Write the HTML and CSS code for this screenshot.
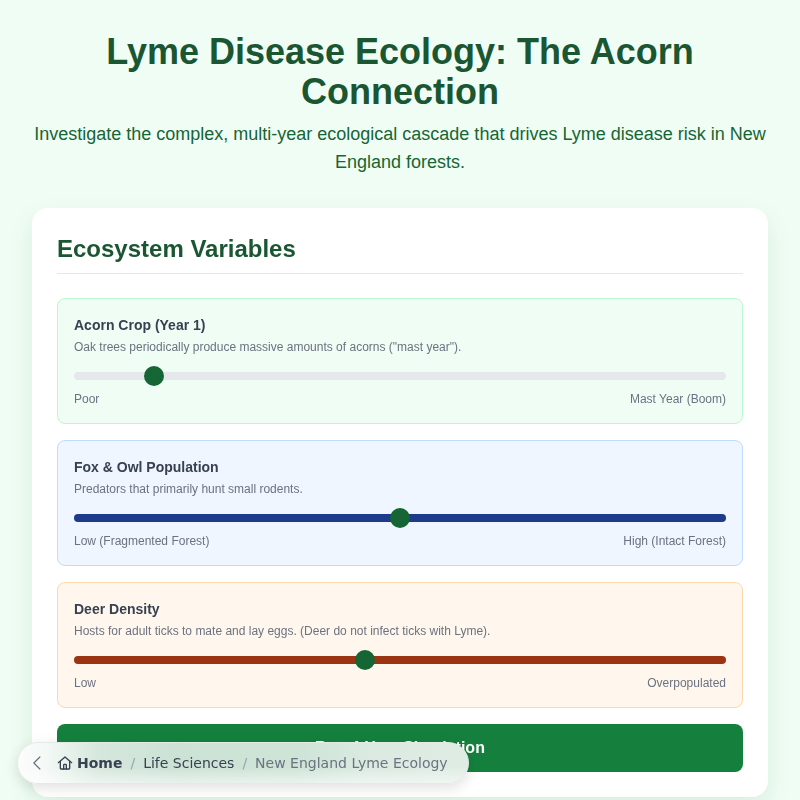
FILE: index.html
```html
<!DOCTYPE html>
<html lang="en">
<head>
    <meta charset="UTF-8">
    <meta name="viewport" content="width=device-width, initial-scale=1.0">
    <title>Lyme Disease Ecology: The Acorn Connection</title>
    <link rel="stylesheet" href="styles.css">
</head>
<body>
    <div class="main">
        <header class="intro">
            <h1>Lyme Disease Ecology: The Acorn Connection</h1>
            <p>Investigate the complex, multi-year ecological cascade that drives Lyme disease risk in New England forests.</p>
        </header>

        <section class="card">
            <h2>Ecosystem Variables</h2>

            <div class="variable acorn">
                <h3>Acorn Crop (Year 1)</h3>
                <p class="desc">Oak trees periodically produce massive amounts of acorns ("mast year").</p>
                <div class="track"><span class="thumb" style="left: 70px"></span></div>
                <div class="ends"><span>Poor</span><span>Mast Year (Boom)</span></div>
            </div>

            <div class="variable fox">
                <h3>Fox &amp; Owl Population</h3>
                <p class="desc">Predators that primarily hunt small rodents.</p>
                <div class="track"><span class="thumb" style="left: 316px"></span></div>
                <div class="ends"><span>Low (Fragmented Forest)</span><span>High (Intact Forest)</span></div>
            </div>

            <div class="variable deer">
                <h3>Deer Density</h3>
                <p class="desc">Hosts for adult ticks to mate and lay eggs. (Deer do not infect ticks with Lyme).</p>
                <div class="track"><span class="thumb" style="left: 281px"></span></div>
                <div class="ends"><span>Low</span><span>Overpopulated</span></div>
            </div>

            <button class="run" type="button">Run 4-Year Simulation</button>
        </section>
    </div>

    <nav class="crumbs">
        <svg class="back" width="18" height="18" viewBox="0 0 24 24" fill="none" stroke="currentColor" stroke-width="1.6" stroke-linecap="round" stroke-linejoin="round"><path d="M14.5 4l-8 8 8 8"/></svg>
        <a class="home" href="#">
            <svg width="16" height="16" viewBox="0 0 24 24" fill="none" stroke="currentColor" stroke-width="2" stroke-linecap="round" stroke-linejoin="round"><path d="M2 11.5L12 3l10 8.5"/><path d="M5 9.5V20a1 1 0 0 0 1 1h12a1 1 0 0 0 1-1V9.5"/><path d="M10 21v-6a1 1 0 0 1 1-1h2a1 1 0 0 1 1 1v6"/></svg>
            Home
        </a>
        <span class="sep">/</span>
        <a href="#">Life Sciences</a>
        <span class="sep">/</span>
        <span class="current">New England Lyme Ecology</span>
    </nav>
</body>
</html>
```

FILE: styles.css
```css
* {
    box-sizing: border-box;
}
html, body {
    height: 800px;
    overflow: hidden;
}
body {
    margin: 0;
    background: #f0fdf4;
    font-family: "Liberation Sans", Arial, sans-serif;
}
.main {
    padding: 32px 32px 0;
}
.intro {
    text-align: center;
    margin-bottom: 32px;
}
h1 {
    margin: 0;
    font-size: 36px;
    line-height: 40px;
    font-weight: 700;
    color: #1a5632;
}
.intro p {
    margin: 8px 0 0;
    font-size: 18px;
    line-height: 28px;
    color: #166534;
}
.card {
    background: #fff;
    border-radius: 16px;
    padding: 24px 25px 25px;
    box-shadow: 0 10px 25px rgba(22, 101, 52, 0.1);
    will-change: transform;
}
h2 {
    margin: 0 0 24px;
    padding-bottom: 8px;
    font-size: 24px;
    line-height: 33px;
    font-weight: 700;
    color: #1a5632;
    border-bottom: 1px solid #e5e7eb;
}
.variable {
    border: 1px solid;
    border-radius: 8px;
    padding: 16px;
    margin-bottom: 16px;
    height: 126px;
}
.acorn {
    background: #f0fdf4;
    border-color: #bbf7d0;
}
.acorn .track {
    background: #e5e7eb;
}
.fox {
    background: #eff6ff;
    border-color: #bfdbfe;
}
.fox .track {
    background: #1e3a8a;
}
.deer {
    background: #fff7ed;
    border-color: #fed7aa;
}
.deer .track {
    background: #9a3412;
}
h3 {
    margin: 0;
    font-size: 14px;
    line-height: 20px;
    font-weight: 700;
    color: #374151;
}
.desc {
    margin: 4px 0 0;
    font-size: 12px;
    line-height: 16px;
    color: #6b7280;
}
.track {
    position: relative;
    height: 8px;
    margin-top: 17px;
    border-radius: 4px;
}
.thumb {
    position: absolute;
    top: -6px;
    width: 20px;
    height: 20px;
    border-radius: 50%;
    background: #166534;
}
.ends {
    display: flex;
    justify-content: space-between;
    margin-top: 11px;
    font-size: 12px;
    line-height: 16px;
    color: #6b7280;
}
.run {
    display: block;
    width: 100%;
    height: 48px;
    border: 0;
    border-radius: 8px;
    background: #15803d;
    color: #fff;
    font-family: inherit;
    font-size: 16px;
    font-weight: 700;
}
.crumbs {
    position: fixed;
    z-index: 10;
    left: 17px;
    top: 742px;
    height: 42px;
    display: flex;
    align-items: center;
    gap: 8px;
    padding: 0 20px 0 11px;
    border: 1px solid #e5e9e6;
    border-radius: 21px;
    background:
        linear-gradient(to bottom, rgba(255, 255, 255, 0) 60%, rgba(255, 255, 255, 0.55) 100%),
        linear-gradient(to right, #fcfdfc 0%, #f4f9f6 6%, #d6e7dd 18%, #cce2d5 35%, #cee4d7 62%, #dbeae1 78%, #dfece4 100%);
    box-shadow: 0 4px 14px rgba(0, 0, 0, 0.12);
    font-family: "DejaVu Sans", sans-serif;
    font-size: 14px;
    color: #374151;
    white-space: nowrap;
}
.crumbs a {
    color: inherit;
    text-decoration: none;
}
.back {
    color: #6b7280;
    margin-right: 2px;
}
.home {
    display: flex;
    align-items: center;
    gap: 4px;
    font-weight: 700;
}
.sep {
    color: #9ca3af;
}
.current {
    color: #6b7280;
}
```
